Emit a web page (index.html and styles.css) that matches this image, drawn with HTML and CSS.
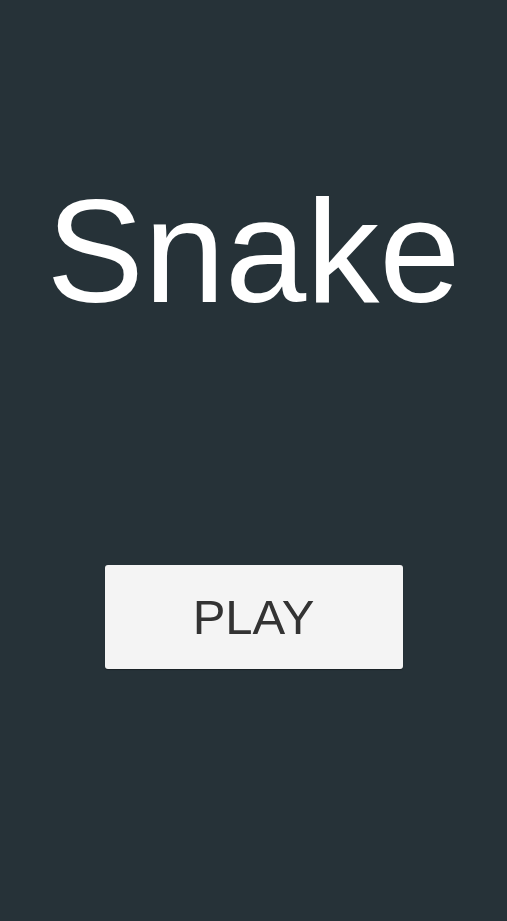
FILE: index.html
```html
<!DOCTYPE html>
<html>
<head>
<meta charset="utf-8">
<link rel="stylesheet" href="styles.css">
</head>
<body>
<main class="screen">
  <h1 class="title">Snake</h1>
  <button class="play">PLAY</button>
</main>
</body>
</html>
```
FILE: styles.css
```css
html, body {
  margin: 0;
  padding: 0;
  background: #263238;
}
.screen {
  height: 921px;
  display: flex;
  flex-direction: column;
  align-items: center;
  font-family: "Liberation Sans", Arial, sans-serif;
}
.title {
  margin: 0;
  padding-top: 179px;
  font-size: 146px;
  line-height: 146px;
  font-weight: normal;
  color: #ffffff;
}
.play {
  margin-top: 240px;
  width: 298px;
  height: 104px;
  border: none;
  border-radius: 3px;
  background: #f4f4f4;
  box-shadow: 0 1px 1px rgba(0, 0, 0, 0.35);
  color: #333333;
  font-family: "Liberation Sans", Arial, sans-serif;
  font-size: 49px;
  padding: 0;
  display: flex;
  align-items: center;
  justify-content: center;
}
```
